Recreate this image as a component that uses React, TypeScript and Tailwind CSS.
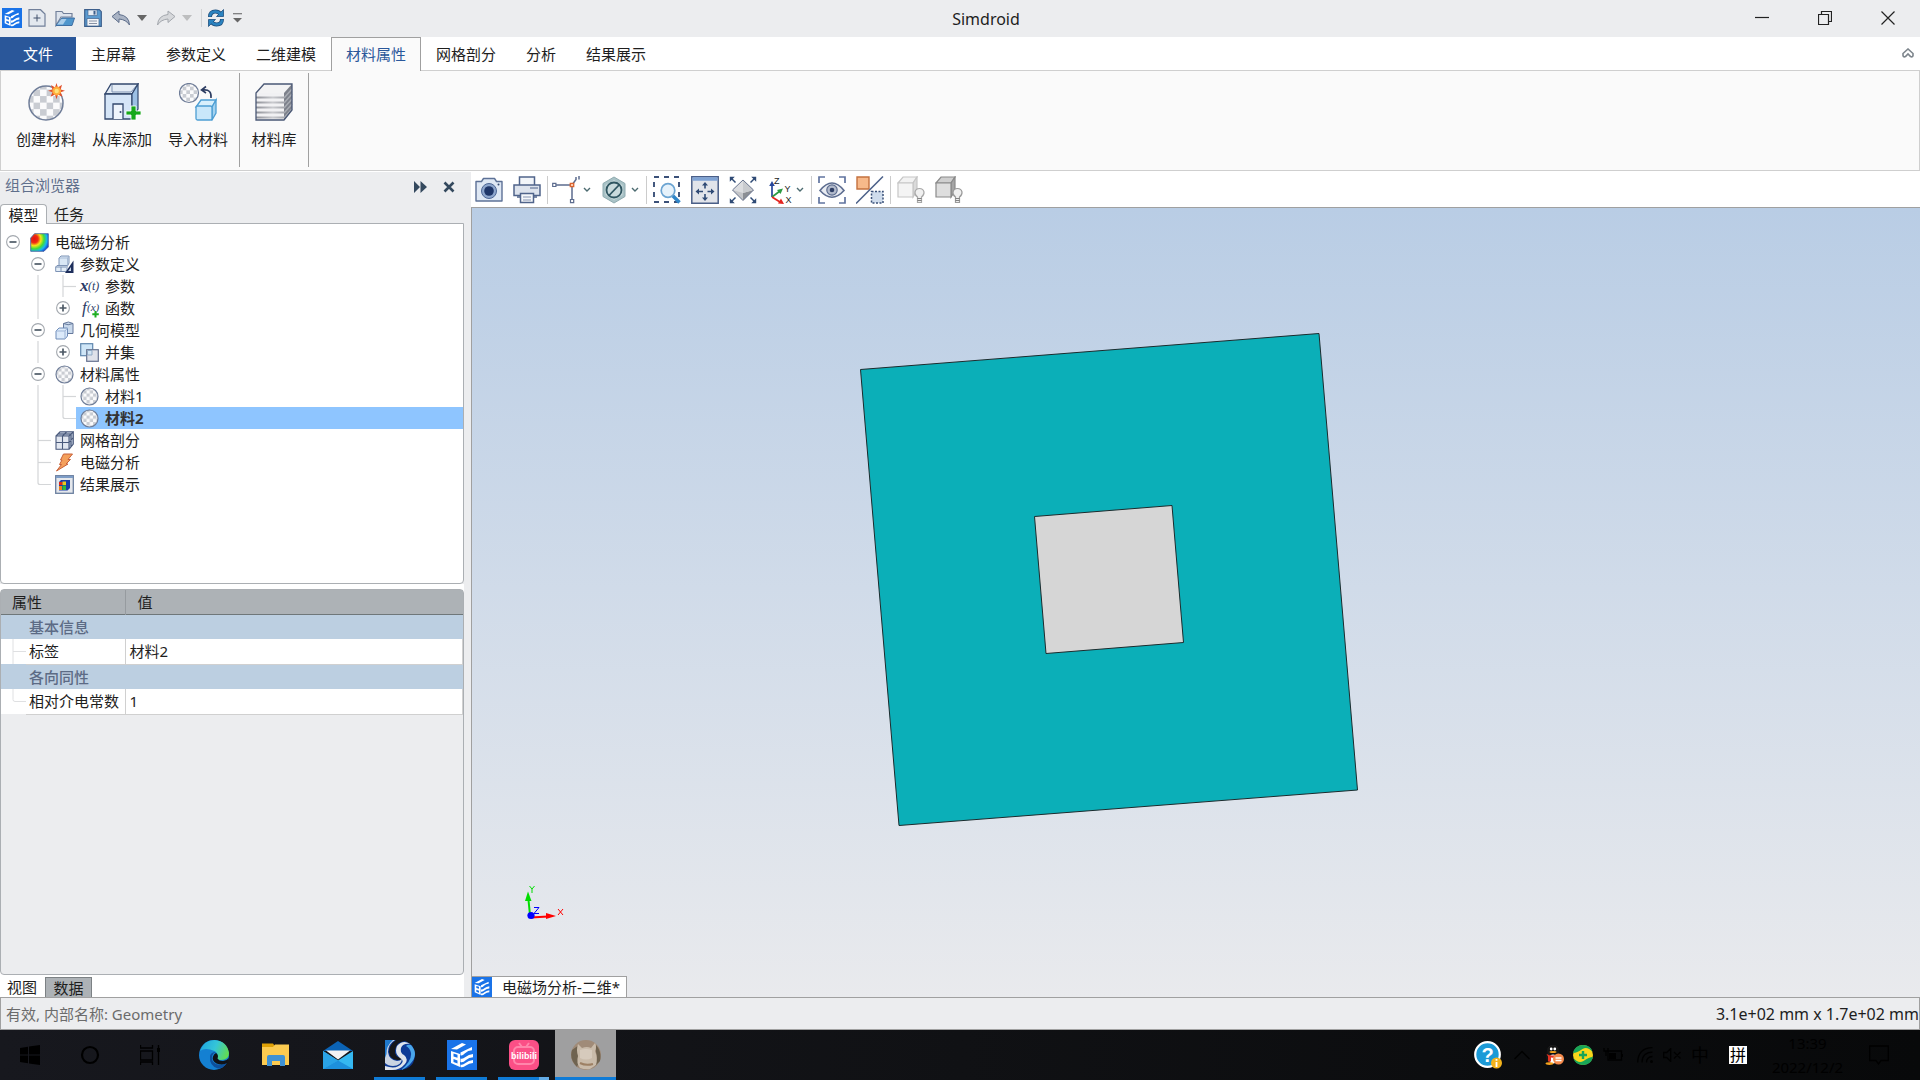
import { useState } from "react";
import type { ReactNode } from "react";

type Guide = "none" | "line" | "tee" | "elbow" | "plus" | "minus";

interface TreeNode {
  label: string;
  guides: Guide[];
  icon: ReactNode;
}

const NAVY = "#2f4a75";

/* ---------- shared drawings ---------- */

function AppLogo({ className }: { className: string }) {
  return (
    <svg viewBox="0 0 30 30" className={className}>
      <rect width="30" height="30" fill="#1a73e8" />
      <path d="M4 9 15 3l4 1.500-9 5z" fill="#fff" />
      <path d="M4 11l9 3v13l-9-4zM6.500 13.500v3l4 1.200v-3zM6.500 19v3l4 1.500v-3z" fill="#fff" fillRule="evenodd" />
      <path d="M13.500 12.500 25 7v3.200q-4 0-7 3t-4.500 2zM13.500 18.500q2 1 5-1.500t7.500-3v3.200q-4 0-7 2.800t-5.500 2zM13.500 24.500q2 1 5-1.500t7.500-3v3q-4 0-7 2.500t-5.500 1.500z" fill="#fff" />
    </svg>
  );
}

function Checker({ cx, cy, r, id }: { cx: number; cy: number; r: number; id: string }) {
  const s = r / 2.6;
  return (
    <>
      <defs>
        <pattern id={id} width={s * 2} height={s * 2} patternUnits="userSpaceOnUse">
          <rect width={s * 2} height={s * 2} fill="#fbfbfc" />
          <rect width={s} height={s} fill="#c9ccd2" />
          <rect x={s} y={s} width={s} height={s} fill="#c9ccd2" />
        </pattern>
      </defs>
      <circle cx={cx} cy={cy} r={r} fill={`url(#${id})`} stroke="#6f7d98" strokeWidth={r > 12 ? 1.5 : 1.2} />
    </>
  );
}

function Chevron() {
  return (
    <svg viewBox="0 0 8 6" className="h-1.5 w-2">
      <path d="M1 1l3 3 3-3" fill="none" stroke="#4c6b70" strokeWidth="1.4" />
    </svg>
  );
}

/* ---------- title bar ---------- */

function DropArrow({ color }: { color: string }) {
  return (
    <svg viewBox="0 0 10 6" className="h-1.5 w-2.5">
      <path d="M0 0h10L5 6z" fill={color} />
    </svg>
  );
}

function QuickAccess() {
  return (
    <div className="flex items-center gap-1.5 pl-0.5">
      <AppLogo className="h-5 w-5" />
      <div className="flex items-center gap-[9px]">
        <button aria-label="新建">
          <svg viewBox="0 0 18 18" className="h-[18px] w-[18px]">
            <path d="M1 .7h11.500L17 5v12.200H1z" fill="#e3e8ef" stroke="#72809a" strokeWidth="1.200" />
            <path d="M5.500 9h7M9 5.500v7" stroke="#40506c" />
          </svg>
        </button>
        <button aria-label="打开">
          <svg viewBox="0 0 20 18" className="h-[18px] w-5">
            <path d="M1 16.500v-14h6l1.500 2H17V8H6z" fill="#dde3ec" stroke="#72809a" strokeWidth="1.200" />
            <path d="M1 16.500 7 9h12.500L17 16.500z" fill="#4f96cc" stroke="#3f6fa3" />
            <path d="M2 15.500 6.500 10h5L8 15.500z" fill="#a9cdea" />
          </svg>
        </button>
        <button aria-label="保存">
          <svg viewBox="0 0 18 18" className="h-[18px] w-[18px]">
            <path d="M.7.7h14.600l2 2v14.600H.7z" fill="#5b9bd0" stroke="#3d5f8b" strokeWidth="1.200" />
            <rect x="4" y="1" width="9" height="5.500" fill="#e7edf4" stroke="#3d5f8b" strokeWidth=".6" />
            <rect x="9.500" y="1.800" width="2" height="3.800" fill="#3d5f8b" />
            <path d="M3 9.500h12V17H3z" fill="#f2f4f7" stroke="#3d5f8b" strokeWidth=".7" />
            <path d="M5 12h8M5 14.500h8" stroke="#8792a6" />
          </svg>
        </button>
        <div className="flex items-center gap-1.5">
          <button aria-label="撤销">
            <svg viewBox="0 0 20 18" className="h-[18px] w-5">
              <path d="M1 7.500 8 2v3.500q10 1 10.500 10.500Q15 10.500 8 10v3.500z" fill="#a9b3c4" stroke="#5d6d8a" strokeLinejoin="round" />
            </svg>
          </button>
          <DropArrow color="#666" />
        </div>
        <div className="flex items-center gap-1.5">
          <button aria-label="重做">
            <svg viewBox="0 0 20 18" className="h-[18px] w-5">
              <path d="M19 7.500 12 2v3.500Q2 6.500 1.500 16 5 10.500 12 10v3.500z" fill="#d6d8db" stroke="#a3a7ad" strokeLinejoin="round" />
            </svg>
          </button>
          <DropArrow color="#bdbebf" />
        </div>
        <div className="flex items-center border-l border-[#cfd1d3] pl-1.5">
          <button aria-label="刷新">
            <svg viewBox="0 0 16 18" className="h-[18px] w-4">
              <path d="M2 8q0-5.500 5.500-5.500Q10.500 2.500 12.500 5" fill="none" stroke="#1f4f7d" strokeWidth="4" />
              <path d="M15.500.5v7h-7z" fill="#2b83c0" stroke="#1f4f7d" strokeWidth=".8" />
              <path d="M14 10q0 5.500-5.500 5.500Q5.500 15.500 3.500 13" fill="none" stroke="#1f4f7d" strokeWidth="4" />
              <path d="M.5 17.500v-7h7z" fill="#2b83c0" stroke="#1f4f7d" strokeWidth=".8" />
              <path d="M2 7.500q0-5 5.500-5Q10.500 2.500 12.500 5M14 10.500q0 5-5.500 5Q5.500 15.500 3.500 13" fill="none" stroke="#2b83c0" strokeWidth="2.400" />
            </svg>
          </button>
        </div>
        <button aria-label="自定义快速访问">
          <svg viewBox="0 0 9 10" className="h-2.5 w-[9px]">
            <path d="M0 .7h9" stroke="#777" strokeWidth="1.200" />
            <path d="M0 5h9L4.500 9.500z" fill="#666" />
          </svg>
        </button>
      </div>
    </div>
  );
}

function TitleBar() {
  return (
    <header className="flex h-[37px] shrink-0 items-center bg-[#ecedef] pr-px pb-px">
      <QuickAccess />
      <h1 className="flex-1 pt-0.5 text-center text-base leading-6">Simdroid</h1>
      <div className="flex self-stretch">
        <button aria-label="最小化" className="flex w-[63px] items-center justify-center">
          <svg viewBox="0 0 14 14" className="h-3.5 w-3.5">
            <path d="M0 6.500h14" stroke="#222" strokeWidth="1.200" />
          </svg>
        </button>
        <button aria-label="还原" className="flex w-[63px] items-center justify-center">
          <svg viewBox="0 0 14 14" className="h-3.5 w-3.5">
            <path d="M3.500 3V.5h10v10H11M.5 3.500h10v10H.5z" fill="none" stroke="#222" strokeWidth="1.200" />
          </svg>
        </button>
        <button aria-label="关闭" className="flex w-[63px] items-center justify-center">
          <svg viewBox="0 0 14 14" className="h-3.5 w-3.5">
            <path d="M.5.5l13 13M13.500.5l-13 13" stroke="#222" strokeWidth="1.200" />
          </svg>
        </button>
      </div>
    </header>
  );
}

/* ---------- ribbon ---------- */

const MENU = ["主屏幕", "参数定义", "二维建模", "材料属性", "网格剖分", "分析", "结果展示"];

function MenuTabs({ active, onSelect }: { active: string; onSelect: (name: string) => void }) {
  return (
    <nav className="flex h-[34px] shrink-0 border-b border-[#cfcfcf] bg-white text-[15px] leading-5">
      <button className="h-[33px] bg-[#2a579a] px-[23px] text-white">文件</button>
      {MENU.map((name) =>
        name === active ? (
          <button
            key={name}
            onClick={() => onSelect(name)}
            className="h-[34px] border border-b-0 border-[#a0a0a0] bg-[#fafafa] px-3.5 pb-0.5 text-[#2a579a]"
          >
            {name}
          </button>
        ) : (
          <button key={name} onClick={() => onSelect(name)} className="h-[33px] px-[15px]">
            {name}
          </button>
        )
      )}
      <button aria-label="折叠功能区" className="ml-auto pr-1.5 pb-0.5">
        <svg viewBox="0 0 12 10" className="h-2.5 w-3">
          <path d="M1 5.500 6 1l5 4.500v2q-.5 2-2.500 1L6 6 3.500 8.500q-2 1-2.500-1z" fill="none" stroke="#7d858c" strokeWidth="1.600" />
        </svg>
      </button>
    </nav>
  );
}

function CreateMaterialIcon() {
  return (
    <svg viewBox="0 0 38 38" className="h-[38px] w-[38px]">
      <Checker cx={19} cy={20} r={17} id="chk-create" />
      <path d="M29.500 0l1.400 4.500L35 1.800l-1.300 4.700 4.300 1.300-4.300 1.500 1.800 4.500-4.500-2.300-1.500 4.700-1.500-4.700-4.500 2.300 2-4.500L21 7.800l4.500-1.300L24 2l4 2.500z" fill="#e2502c" />
      <circle cx="29.700" cy="8" r="4.400" fill="#ffae3b" />
      <circle cx="29.700" cy="8" r="2.200" fill="#ffe27a" />
    </svg>
  );
}

function AddFromLibraryIcon() {
  return (
    <svg viewBox="0 0 38 38" className="h-[38px] w-[38px]">
      <path d="M2 11 8 1h27l-6 10z" fill="#e4ecf5" stroke="#33486e" strokeWidth="1.300" />
      <path d="M9 2v7h19l6-7" fill="none" stroke="#7e93b2" />
      <path d="M2 11h27v25H2z" fill="#d5e5f7" stroke="#33486e" strokeWidth="1.300" />
      <path d="M29 11l6-10v25l-6 9z" fill="#9cc0e4" stroke="#33486e" strokeWidth="1.200" />
      <path d="M10 36V21h10v15" fill="#eef4fb" stroke="#33486e" strokeWidth="1.300" />
      <circle cx="17.500" cy="29" r="1" fill="#33486e" />
      <path d="M28 23h5v5h5v4h-5v5h-5v-5h-5v-4h5z" fill="#17a81a" stroke="#fff" strokeWidth=".8" />
    </svg>
  );
}

function ImportMaterialIcon() {
  return (
    <svg viewBox="0 0 38 38" className="h-[38px] w-[38px]">
      <Checker cx={10} cy={10} r={9.500} id="chk-import" />
      <path d="M24 7q9-1 8 8M27 3.500 22.500 7l4.500 3" fill="none" stroke="#2d3d62" strokeWidth="1.600" />
      <path d="M17 24l5-7h15l-4 7z" fill="#d8effc" stroke="#4d9ed3" strokeWidth="1.300" />
      <path d="M33 24l4-7v13l-4 7z" fill="#a3d2f0" stroke="#4d9ed3" strokeWidth="1.300" />
      <rect x="17" y="23" width="16" height="14" rx="1.500" fill="#c9e7fa" stroke="#4d9ed3" strokeWidth="1.300" />
    </svg>
  );
}

function LibraryIcon() {
  return (
    <svg viewBox="0 0 38 38" className="h-[38px] w-[38px]">
      <defs>
        <linearGradient id="slab" x1="0" x2="1" y1="0" y2="0">
          <stop offset="0" stopColor="#8f9198" />
          <stop offset=".6" stopColor="#c9cace" />
          <stop offset="1" stopColor="#a6a8ae" />
        </linearGradient>
      </defs>
      <path d="M1 10 9 1h28l-8 9z" fill="#f3f3f4" />
      <path d="M1 10h28v27H1z" fill="#f1f1f3" />
      <path d="M29 10l8-9v26l-8 10z" fill="#7d818b" />
      <path d="M1 13.500h28v2H1zM1 18.500h28v2H1zM1 23.500h28v2H1zM1 28.500h28v2H1zM1 33.500h28v2H1z" fill="url(#slab)" />
      <path d="M29 15l8-9M29 20l8-9M29 25l8-9M29 30l8-9M29 35l8-9" stroke="#a9acb3" strokeWidth="1.500" />
      <path d="M1 10 9 1h28v26l-8 10H1z" fill="none" stroke="#4a5875" strokeWidth="1.300" />
    </svg>
  );
}

function RibbonButton({ label, icon, className }: { label: string; icon: ReactNode; className: string }) {
  return (
    <button className={`flex flex-col items-center gap-2 pt-2.5 ${className}`}>
      {icon}
      <span className="text-[15px] leading-5">{label}</span>
    </button>
  );
}

function Ribbon() {
  return (
    <div className="flex h-[100px] shrink-0 border-x border-b border-[#cfcfcf] bg-[#fafafa] pt-0.5 pb-[3px]">
      <div className="flex items-start border-r border-[#a0a0a0] pr-[3px] pl-[7px]">
        <RibbonButton label="创建材料" icon={<CreateMaterialIcon />} className="w-[76px]" />
        <RibbonButton label="从库添加" icon={<AddFromLibraryIcon />} className="w-[76px]" />
        <RibbonButton label="导入材料" icon={<ImportMaterialIcon />} className="w-[76px]" />
      </div>
      <div className="flex items-start border-r border-[#a0a0a0]">
        <RibbonButton label="材料库" icon={<LibraryIcon />} className="w-[68px]" />
      </div>
    </div>
  );
}

/* ---------- model tree ---------- */

function GuideCell({ kind }: { kind: Guide }) {
  if (kind === "plus" || kind === "minus") {
    return (
      <button aria-label={kind === "plus" ? "展开" : "折叠"} className="flex h-[22px] w-[25px] items-center pl-[5px]">
        <svg viewBox="0 0 14 14" className="h-3.5 w-3.5">
          <circle cx="7" cy="7" r="6.400" fill="#fff" stroke="#a3a8ae" strokeWidth="1.100" />
          <path d={kind === "plus" ? "M3.500 7h7M7 3.500v7" : "M3.500 7h7"} stroke="#4d5a66" strokeWidth="1.700" />
        </svg>
      </button>
    );
  }
  return (
    <svg viewBox="0 0 25 22" className="h-[22px] w-[25px]">
      {kind !== "none" && (
        <g fill="none" stroke="#d4d6d8" strokeWidth="1.200">
          {(kind === "line" || kind === "tee") && <path d="M12 0v22" />}
          {kind === "tee" && <path d="M12 11.500H25" />}
          {kind === "elbow" && <path d="M12 0v9.500q0 2 2 2H25" />}
        </g>
      )}
    </svg>
  );
}

function RainbowIcon() {
  return (
    <svg viewBox="0 0 19 19" className="h-[19px] w-[19px]">
      <defs>
        <radialGradient id="rainbow" cx=".2" cy=".3" r="1">
          <stop offset="0" stopColor="#e01212" />
          <stop offset=".22" stopColor="#f02c12" />
          <stop offset=".38" stopColor="#f7e617" />
          <stop offset=".56" stopColor="#3fdc3c" />
          <stop offset=".72" stopColor="#17b6f0" />
          <stop offset=".9" stopColor="#1636d6" />
        </radialGradient>
      </defs>
      <path d="M.7 5 4.500.7h13.800V14L14 18.300H.7z" fill="url(#rainbow)" stroke="#3a5b96" strokeWidth=".8" />
    </svg>
  );
}

function ParamDefIcon() {
  return (
    <svg viewBox="0 0 19 19" className="h-[19px] w-[19px]">
      <path d="M4 3 6 1h8v7l-1.500 3H4z" fill="#d9e7f5" stroke="#7d93b5" />
      <path d="M4 3h8.500v8M12.500 3 14 1" fill="none" stroke="#9db1cd" strokeWidth=".8" />
      <path d="M.7 12l1.300-1.500h10v6H.7zM6 12v4.500M.7 12H11" fill="#e3edf7" stroke="#7d93b5" />
      <path d="M18.500 5.500V18H10z" fill="#1e2f5c" />
      <path d="M16 12v4h-2.800z" fill="#c9d6e8" />
    </svg>
  );
}

function ParamIcon() {
  return (
    <svg viewBox="0 0 19 19" className="h-[19px] w-[19px] overflow-visible">
      <text x="0" y="13.500" fontFamily="Liberation Serif, serif" fontStyle="italic" fontWeight="bold" fontSize="17" fill="#2b3b66">
        x
      </text>
      <text x="8" y="13" fontFamily="Liberation Serif, serif" fontStyle="italic" fontSize="12" fill="#2b3b66">
        (t)
      </text>
    </svg>
  );
}

function FunctionIcon() {
  return (
    <svg viewBox="0 0 19 19" className="h-[19px] w-[19px] overflow-visible">
      <text x="2" y="13.500" fontFamily="Liberation Serif, serif" fontStyle="italic" fontSize="17" fill="#2b3b66">
        f
      </text>
      <text x="7" y="12" fontFamily="Liberation Serif, serif" fontStyle="italic" fontSize="11" fill="#2b3b66">
        (x)
      </text>
      <path d="M15.500 12v6.500M12.300 15.200h6.500" stroke="#1fae22" strokeWidth="2" />
    </svg>
  );
}

function GeometryIcon() {
  return (
    <svg viewBox="0 0 19 19" className="h-[19px] w-[19px]">
      <path d="M8.500 2.500v10h9.500v-10q-4.500-3-9.500 0z" fill="#c9d9ec" stroke="#66799c" />
      <path d="M8.500 2.500q4.500 2.500 9.500 0" fill="none" stroke="#66799c" />
      <path d="M1 10l3-3h8.500v8l-2.500 3H1z" fill="#dceafa" stroke="#6f8cb8" />
      <path d="M1 10h9l2.500-3M10 10v8" fill="none" stroke="#9db4d6" />
    </svg>
  );
}

function UnionIcon() {
  return (
    <svg viewBox="0 0 19 19" className="h-[19px] w-[19px]">
      <rect x=".7" y=".7" width="12" height="12" fill="#cfe6f7" stroke="#5f86ad" strokeWidth="1.200" />
      <rect x="6.700" y="6.700" width="11.600" height="11.600" fill="#dfe2ea" stroke="#67738f" strokeWidth="1.200" />
      <path d="M7.500 7.500h4.500v4.500H7.500z" fill="#d3e5f4" stroke="#8fa9c4" />
    </svg>
  );
}

function MaterialIcon({ id }: { id: string }) {
  return (
    <svg viewBox="0 0 19 19" className="h-[19px] w-[19px]">
      <Checker cx={9.500} cy={9.500} r={8.500} id={id} />
    </svg>
  );
}

function MeshIcon() {
  return (
    <svg viewBox="0 0 19 19" className="h-[19px] w-[19px]">
      <path d="M1 5l4-4.200h13.300V13L14 18.300H1z" fill="#b4bfd2" />
      <path d="M1 5h13v13H1z" fill="#e2e7f0" />
      <path d="M1 5h13v13.300H1zM1 5 5 .8h13.300L14 5M18.300.8V13L14 18.300M7.500 18V5l4-4M1 11.500h13l4.300-5M3 3h13v13" fill="none" stroke="#4a5a7c" strokeWidth="1.100" />
    </svg>
  );
}

function BoltIcon() {
  return (
    <svg viewBox="0 0 19 19" className="h-[19px] w-[19px]">
      <path d="M8.500 1h9l-4.500 5.500h2.500L11 11h2L1.500 18l5-6.500H4.500L7 7H5.500z" fill="#f4a05c" stroke="#c7613a" strokeLinejoin="round" />
    </svg>
  );
}

function ResultIcon() {
  return (
    <svg viewBox="0 0 19 19" className="h-[19px] w-[19px]">
      <rect x=".7" y=".7" width="17.600" height="17.600" fill="#e4e7ec" stroke="#6b7f9f" strokeWidth="1.300" />
      <path d="M1 2h17" stroke="#7d9cc6" strokeWidth="2" />
      <path d="M4 7l2-2h9v8l-2.500 2.500H4z" fill="#1d3fa8" />
      <path d="M4 7h3.500v3H4z" fill="#e32619" />
      <path d="M7.500 6.500H11V10H7.500z" fill="#f0c91c" />
      <path d="M4 11h3v4H4z" fill="#f0831c" />
      <path d="M7.500 10.500H11V15H7.500z" fill="#2ebc3c" />
    </svg>
  );
}

const TREE: TreeNode[] = [
  { label: "电磁场分析", guides: ["minus"], icon: <RainbowIcon /> },
  { label: "参数定义", guides: ["none", "minus"], icon: <ParamDefIcon /> },
  { label: "参数", guides: ["none", "line", "tee"], icon: <ParamIcon /> },
  { label: "函数", guides: ["none", "line", "plus"], icon: <FunctionIcon /> },
  { label: "几何模型", guides: ["none", "minus"], icon: <GeometryIcon /> },
  { label: "并集", guides: ["none", "line", "plus"], icon: <UnionIcon /> },
  { label: "材料属性", guides: ["none", "minus"], icon: <MaterialIcon id="chk-mat" /> },
  { label: "材料1", guides: ["none", "line", "tee"], icon: <MaterialIcon id="chk-mat1" /> },
  { label: "材料2", guides: ["none", "line", "elbow"], icon: <MaterialIcon id="chk-mat2" /> },
  { label: "网格剖分", guides: ["none", "tee"], icon: <MeshIcon /> },
  { label: "电磁分析", guides: ["none", "tee"], icon: <BoltIcon /> },
  { label: "结果展示", guides: ["none", "elbow"], icon: <ResultIcon /> },
];

function ModelTree() {
  const [selected, setSelected] = useState("材料2");
  return (
    <ul className="h-[361px] shrink-0 rounded-b border border-[#abafb3] bg-white pt-[7px]">
      {TREE.map((node) => (
        <li key={node.label} className="flex h-[22px]">
          {node.guides.map((kind, i) => (
            <GuideCell key={i} kind={kind} />
          ))}
          <button
            onClick={() => setSelected(node.label)}
            className={`flex flex-1 items-center gap-1.5 pl-1 text-left ${
              selected === node.label ? "bg-[#8ec5ff] font-bold text-[#333]" : ""
            }`}
          >
            {node.icon}
            <span>{node.label}</span>
          </button>
        </li>
      ))}
    </ul>
  );
}

/* ---------- property table ---------- */

function PropertyTable() {
  return (
    <div className="mt-[5px] flex-1 rounded border border-[#abafb3] bg-[#ecedef]">
      <table className="w-full table-fixed border-collapse text-left">
        <colgroup>
          <col className="w-[25px]" />
          <col className="w-[99px]" />
          <col />
        </colgroup>
        <thead>
          <tr className="h-6 border-b border-[#6f7779] bg-[#adb2b6]">
            <th colSpan={2} className="border-r border-[#969b9f] pl-[11px] font-normal">属性</th>
            <th className="pl-3 font-normal">值</th>
          </tr>
        </thead>
        <tbody>
          <tr className="h-[25px] bg-[#bccfe1] text-[#5c6b85]">
            <td />
            <th colSpan={2} className="pl-[3px] font-medium">基本信息</th>
          </tr>
          <tr className="h-[25px] bg-white">
            <td className="p-0">
              <svg viewBox="0 0 25 25" className="block h-[25px] w-[25px]">
                <path d="M12 0v25M12 12.500h13" stroke="#dfe0e2" />
              </svg>
            </td>
            <td className="border-r border-b border-[#d0d0d0] pl-[3px]">标签</td>
            <td className="border-r border-b border-[#d0d0d0] pl-1">材料2</td>
          </tr>
          <tr className="h-[25px] bg-[#bccfe1] text-[#5c6b85]">
            <td />
            <th colSpan={2} className="pl-[3px] font-medium">各向同性</th>
          </tr>
          <tr className="h-[25px] bg-white">
            <td className="p-0">
              <svg viewBox="0 0 25 25" className="block h-[25px] w-[25px]">
                <path d="M12 0v10.500q0 2 2 2h11" fill="none" stroke="#dfe0e2" />
              </svg>
            </td>
            <td className="border-r border-b border-[#d0d0d0] pl-[3px] whitespace-nowrap">相对介电常数</td>
            <td className="border-r border-b border-[#d0d0d0] pl-1">1</td>
          </tr>
        </tbody>
      </table>
    </div>
  );
}

function Browser() {
  return (
    <aside className="flex w-[471px] shrink-0 flex-col bg-[#ecedef] pr-[7px] text-[15px] leading-5">
      <div className="flex h-8 items-center pr-[2px] pl-[5px] text-[#5f6f8c]">
        <h2 className="flex-1 pb-1.5">组合浏览器</h2>
        <div className="flex items-center gap-4 pr-[7px] pb-0.5">
          <button aria-label="移动面板">
            <svg viewBox="0 0 13 12" className="h-3 w-[13px]">
              <path d="M0 0l6 6-6 6zM6.500 0l6.500 6-6.500 6z" fill="#34495e" />
            </svg>
          </button>
          <button aria-label="关闭面板">
            <svg viewBox="0 0 12 12" className="h-3 w-3">
              <path d="M1.500 1.500l9 9M10.500 1.500l-9 9" stroke="#34495e" strokeWidth="2.600" />
            </svg>
          </button>
        </div>
      </div>
      <div className="flex h-[19px] shrink-0">
        <button className="z-10 -mb-px w-[47px] rounded-t border border-b-0 border-[#abafb3] bg-white">模型</button>
        <button className="pl-[7px]">任务</button>
      </div>
      <ModelTree />
      <div className="flex flex-1 flex-col bg-white">
        <PropertyTable />
        <div className="flex h-[22px] items-end">
          <button className="w-[45px] pl-[7px] text-left">视图</button>
          <button className="h-5 w-[47px] border border-b-0 border-[#7c8184] bg-[#adb2b6]">数据</button>
        </div>
      </div>
    </aside>
  );
}

/* ---------- viewport toolbar ---------- */

function ToolSvg({ label, children }: { label: string; children: ReactNode }) {
  return (
    <button aria-label={label}>
      <svg viewBox="0 0 28 28" className="h-7 w-7">
        {children}
      </svg>
    </button>
  );
}

function DimCube({ dark }: { dark: boolean }) {
  const line = dark ? "#8a8a8a" : "#c6c6c6";
  return (
    <>
      <path d="M1 7 6 1h14l-4 6z" fill={dark ? "#cfcfcf" : "#f2f2f2"} stroke={line} strokeWidth="1.200" />
      <path d="M16 7l4-6v14l-4 6z" fill={dark ? "#a5a5a5" : "#dadada"} stroke={line} strokeWidth="1.200" />
      <path d="M1 7h15v14H1z" fill={dark ? "#dedede" : "#f4f4f4"} stroke={line} strokeWidth="1.200" />
      <path d="M20.500 21q-3-2-2.500-5 .8-3.500 4.500-3.500t4.500 3.500q.3 3-2.500 5v5.500h-4z" fill="#f0f0f0" stroke={dark ? "#9a9a9a" : "#a8a8a8"} strokeWidth="1.200" />
      <path d="M20.500 22.500h4M20.500 24.500h4" stroke="#777" strokeWidth=".9" />
    </>
  );
}

function ViewToolbar() {
  return (
    <div className="flex h-9 shrink-0 items-center border-b border-[#a0a0a0] bg-white">
      <div className="flex items-center gap-2.5 border-r border-[#cccccc] pr-1.5 pl-1">
        <ToolSvg label="截图">
          <path d="M1 5.500h5.500l2-3h11l2 3H27V25H1z" fill="#dfe8f4" stroke="#5d7196" strokeWidth="1.400" strokeLinejoin="round" />
          <circle cx="14" cy="15" r="7.500" fill="#8ea6cc" stroke="#4d6694" />
          <circle cx="14" cy="15" r="4.800" fill="#1f3668" />
          <circle cx="23.500" cy="8.500" r="1" fill="#33486e" />
        </ToolSvg>
        <ToolSvg label="打印">
          <path d="M6.500 9V1h15v8" fill="#f2f5f9" stroke="#50648b" strokeWidth="1.500" />
          <path d="M1 9h26v10.500H1z" fill="#dde3ed" stroke="#50648b" strokeWidth="1.500" />
          <path d="M17 12h8" stroke="#50648b" />
          <path d="M4 21h20" stroke="#50648b" strokeWidth="1.500" />
          <path d="M7.500 17.500h13v9h-13z" fill="#f5f7fa" stroke="#50648b" strokeWidth="1.500" />
          <path d="M10 21h8M10 24h8" stroke="#8392b0" />
        </ToolSvg>
      </div>
      <div className="flex items-center border-r border-[#cccccc] pr-[7px] pl-1">
        <div className="flex items-center gap-[3px]">
          <ToolSvg label="捕捉">
            <path d="M3 9h17v16M20 9l4-5.500L24 1M27 0v3.500" fill="none" stroke="#5c6c8e" strokeWidth="1.500" />
            <path d="M.7 7.300h3.200v3.200H.7zM18.500 23.500h3.200v3.200h-3.200z" fill="#fff" stroke="#5c6c8e" strokeWidth="1.200" />
            <path d="M18.300 7.300h3.400v3.400h-3.400z" fill="#fcc9ae" stroke="#d9632f" strokeWidth="1.300" />
          </ToolSvg>
          <Chevron />
        </div>
        <div className="ml-2.5 flex items-center gap-1">
          <button aria-label="显示样式">
            <svg viewBox="0 0 26 28" className="h-7 w-[26px]">
              <path d="M13 1l11 6.500v13L13 27 2 20.500v-13z" fill="#a9c2c6" stroke="#8fabb0" />
              <path d="M13 4l8.500 5v10L13 24l-8.500-5V9z" fill="#c9dadc" />
              <circle cx="13" cy="14" r="7.500" fill="none" stroke="#2f5560" strokeWidth="1.800" />
              <path d="M8 19.500 18.500 8.500" stroke="#2f5560" strokeWidth="1.800" />
            </svg>
          </button>
          <Chevron />
        </div>
      </div>
      <div className="flex items-center border-r border-[#cccccc] pr-[7px] pl-1.5">
        <div className="flex items-center gap-2.5">
          <ToolSvg label="框选缩放">
            <path d="M1 1h25v25H1z" fill="none" stroke="#3b5179" strokeWidth="1.900" strokeDasharray="5 5" />
            <path d="M6 6h14v14H6z" fill="#fff" />
            <path d="M19 19l7.500 7.500" stroke="#2f86c9" strokeWidth="3.600" />
            <circle cx="15" cy="14.500" r="6.800" fill="#e6f2fb" stroke="#6ba4d2" strokeWidth="1.700" />
          </ToolSvg>
          <ToolSvg label="平移">
            <path d="M.8.8h26.400v26.400H.8z" fill="#e1e4ea" stroke="#4a5f88" strokeWidth="1.500" />
            <path d="M1.500 3h25" stroke="#7fa3d4" strokeWidth="3.500" />
            <path d="M14 8v4.500M14 18v4.500M6.500 15.500H12M16.500 15.500H22" stroke={NAVY} strokeWidth="1.600" />
            <path d="M14 6l3 3.500h-6zM14 25l3-3.500h-6zM4.500 15.500 8 12.500v6zM23.500 15.500l-3.500-3v6z" fill={NAVY} />
          </ToolSvg>
          <ToolSvg label="适应窗口">
            <path d="M14 4l10.500 10L14 24.500 3.500 14z" fill="#dcdde0" />
            <path d="M3.500 14 14 17v7.500z" fill="#c3c5c9" />
            <path d="M24.500 14 14 17v7.500z" fill="#8c8f95" />
            <path d="M14 4l10.500 10L14 17z" fill="#c9cbcf" />
            <path d="M14 4l10.500 10L14 24.500 3.500 14z" fill="none" stroke="#6b7690" />
            <path d="M6.500 6.500 2.500 2.500M21.500 6.500l4-4M6.500 21.500l-4 4M21.500 21.500l4 4" stroke={NAVY} strokeWidth="1.500" />
            <path d="M.8.8h5L.8 5.800zM27.200.8h-5l5 5zM.8 27.200h5l-5-5zM27.200 27.200h-5l5-5z" fill={NAVY} />
          </ToolSvg>
        </div>
        <div className="ml-2.5 flex items-center gap-px">
          <ToolSvg label="视角">
            <path d="M5 21V8" stroke="#27469b" strokeWidth="1.700" />
            <path d="M5 5l2.800 5H2.200z" fill="#27469b" />
            <path d="M5 21l8-6" stroke="#2c9b43" strokeWidth="1.700" />
            <path d="M16 12.500l-2.500 5.500-3.500-4z" fill="#2c9b43" />
            <path d="M5 21l8 5" stroke="#e3241f" strokeWidth="1.700" />
            <path d="M17 28l-6-.5 3-5z" fill="#e3241f" />
            <text x="7" y="7.500" fontSize="9" fontFamily="Liberation Sans, sans-serif" fill="#222">Z</text>
            <text x="17.500" y="15.500" fontSize="9" fontFamily="Liberation Sans, sans-serif" fill="#222">Y</text>
            <text x="18.500" y="27" fontSize="9" fontFamily="Liberation Sans, sans-serif" fill="#222">X</text>
          </ToolSvg>
          <Chevron />
        </div>
      </div>
      <div className="flex items-center gap-2.5 border-r border-[#cccccc] px-1.5">
        <ToolSvg label="显示全部">
          <path d="M1 7V1h6M21 1h6v6M27 21v6h-6M7 27H1v-6" fill="none" stroke="#6074a0" strokeWidth="1.700" />
          <path d="M2 14.500q12-15 24 0-12 13.500-24 0z" fill="#e9ecf2" stroke="#5d6d90" strokeWidth="1.600" />
          <circle cx="14" cy="14" r="5.200" fill="#b2bacb" stroke="#5d6d90" strokeWidth="1.200" />
          <circle cx="14" cy="14" r="2.300" fill="#2f3f66" />
        </ToolSvg>
        <ToolSvg label="反选显示">
          <path d="M1 1h12v12H1z" fill="#f7b98a" stroke="#c4713f" strokeWidth="1.400" />
          <path d="M0 27.500 27 .5" stroke="#4a5f88" strokeWidth="1.500" />
          <path d="M15.500 15.500h11.500v11.500H15.500z" fill="#cfdcec" stroke="#3b5179" strokeWidth="1.500" strokeDasharray="2 1.500" />
        </ToolSvg>
      </div>
      <div className="flex items-center gap-2.5 pl-1.5">
        <ToolSvg label="显示对象">
          <DimCube dark={false} />
        </ToolSvg>
        <ToolSvg label="隐藏对象">
          <DimCube dark />
        </ToolSvg>
      </div>
    </div>
  );
}

/* ---------- viewport ---------- */

function AxisTriad() {
  return (
    <svg viewBox="0 0 40 40" className="mb-[50px] ml-[52px] h-10 w-10">
      <path d="M6 29 4.500 14" stroke="#0d0" strokeWidth="2" />
      <path d="M4 5.500l3.500 9.500H1z" fill="#0d0" />
      <path d="M7 31.500l17-1" stroke="#f00" strokeWidth="2" />
      <path d="M32 30l-10-3v6z" fill="#f00" />
      <circle cx="7" cy="29.500" r="3.600" fill="#00f" />
      <path d="M5.500 0l2.500 3 2.500-3M8 3v4" fill="none" stroke="#0d0" />
      <path d="M10 21.500h5l-5 6h5" fill="none" stroke="#00f" />
      <path d="M34 23l5 6M39 23l-5 6" stroke="#f00" />
    </svg>
  );
}

function Viewport() {
  return (
    <section className="flex min-w-0 flex-1 flex-col">
      <ViewToolbar />
      <div className="flex min-h-0 flex-1 flex-col border-l border-[#a0a0a0] bg-linear-to-b from-[#b9cde5] to-[#e9eaed]">
        <div className="grid min-h-0 flex-1 items-end">
          <svg viewBox="0 0 1448 768" className="col-start-1 row-start-1 h-full w-full">
            <path d="M388.500 161.500 847 125.500 885.500 582 427 617.500z" fill="#0bafb8" stroke="#1b2b2d" />
            <path d="M562.500 308.500 700 297.500 711.500 434.500 574 445.500z" fill="#d6d6d6" stroke="#1b2b2d" />
          </svg>
          <div className="col-start-1 row-start-1 flex">
            <AxisTriad />
          </div>
        </div>
        <div className="flex h-[21px] shrink-0">
          <button className="flex items-center gap-2.5 border-t border-r border-[#a0a0a0] bg-white pr-1.5 text-[15px] leading-5">
            <AppLogo className="h-5 w-5" />
            <span>电磁场分析-二维*</span>
          </button>
        </div>
      </div>
    </section>
  );
}

/* ---------- taskbar ---------- */

type TaskState = "idle" | "running" | "grouped" | "active";

function TaskCell({ label, state = "idle", children }: { label: string; state?: TaskState; children: ReactNode }) {
  return (
    <button
      aria-label={label}
      className={`flex h-full w-[61px] flex-col items-center ${state === "active" ? "bg-[#9f9fa0]" : ""}`}
    >
      <span className="flex flex-1 items-center pt-[3px]">{children}</span>
      {state === "idle" && <span className="h-[3px]" />}
      {state === "running" && <span className="h-[3px] w-[51px] bg-[#0f7bd6]" />}
      {state === "grouped" && (
        <span className="flex h-[3px] w-[51px] justify-end bg-[#0f7bd6]">
          <span className="w-2.5 bg-[#63abe6]" />
        </span>
      )}
      {state === "active" && <span className="h-[3px] w-full bg-[#0f7bd6]" />}
    </button>
  );
}

function Taskbar() {
  return (
    <footer className="flex h-[50px] shrink-0 items-center bg-linear-to-r from-[#17181e] via-[#101114] to-[#08090a] text-[15px] text-black">
      <button aria-label="开始" className="flex w-[60px] justify-center">
        <svg viewBox="0 0 20 20" className="h-5 w-5">
          <path d="M0 3l8-1.200v7.700H0zM9 1.600 20 0v9.500H9zM0 10.500h8v7.700L0 17zM9 10.500h11V20L9 18.400z" fill="#000" />
        </svg>
      </button>
      <button aria-label="搜索" className="flex w-[60px] justify-center">
        <svg viewBox="0 0 20 20" className="h-5 w-5">
          <circle cx="10" cy="10" r="8" fill="none" stroke="#000" strokeWidth="2.200" />
        </svg>
      </button>
      <button aria-label="任务视图" className="flex w-[60px] justify-center">
        <svg viewBox="0 0 20 20" className="h-5 w-5">
          <path d="M.5 0v3h12V0M.5 6h12v9H.5zM.5 20v-3h12v3M18.500 0v20" fill="none" stroke="#000" strokeWidth="1.300" />
          <path d="M17 3h3v4h-3z" fill="#000" />
        </svg>
      </button>
      <div className="flex gap-px self-stretch pl-[3px]">
        <TaskCell label="Edge">
          <svg viewBox="0 0 30 30" className="h-[30px] w-[30px]">
            <defs>
              <linearGradient id="edge-top" x1="0" x2="1" y1=".3" y2=".6">
                <stop offset="0" stopColor="#1fa8e0" />
                <stop offset=".5" stopColor="#35c5d8" />
                <stop offset="1" stopColor="#63dd4e" />
              </linearGradient>
            </defs>
            <circle cx="15" cy="15" r="15" fill="#1480d2" />
            <path d="M1 11Q5 0 15.500 0 28 1 30 13q0 7-8 7-5 0-4-3.500 1-4-2.500-5.500Q6 7 1 11z" fill="url(#edge-top)" />
            <path d="M11 16q-1 10 8 12.500 5 0 9-5.500-6 3-11 1-5-2.500-4-8 1-3 4-4-5 0-6 4z" fill="#0d4f9c" />
            <path d="M17 13q3 2 1.500 5.500Q20 21 24 21q4-.5 6-3l-1.500 5q-5 2.500-11 .5-5-3-3.500-7 1-3 3-3.500z" fill="#101218" />
          </svg>
        </TaskCell>
        <TaskCell label="文件资源管理器">
          <svg viewBox="0 0 30 30" className="h-[30px] w-[30px]">
            <path d="M1 3.500h11l2.500 3.500H1z" fill="#e0a106" />
            <path d="M1 7h11l2-2.500h14V25H1z" fill="#fccb50" />
            <path d="M6 26V17q0-2 2-2h14q2 0 2 2v9h-5v-5h-8v5z" fill="#3f92d4" />
          </svg>
        </TaskCell>
        <TaskCell label="邮件">
          <svg viewBox="0 0 30 30" className="h-[30px] w-[30px]">
            <path d="M0 11 15 1l15 10z" fill="#0b63b5" />
            <path d="M0 11l15 9.500L30 11v18H0z" fill="#35b8f1" />
            <path d="M0 11l15 9.500L0 29z" fill="#2aa3e6" />
            <path d="M15 20.500 30 29H0z" fill="#1d90dc" />
            <path d="M3 10.500h24L15 19.500z" fill="#f2f2f4" />
          </svg>
        </TaskCell>
        <TaskCell label="Simdroid 启动器" state="running">
          <svg viewBox="0 0 30 30" className="h-[30px] w-[30px]">
            <path d="M0 0h11Q4 5 4 12q1 8 9 8 4 0 4-2-8-1-7-8Q11 2 20 1q9 3 10 13 0 14-14 16H0z" fill="#0e3a96" />
            <path d="M0 0h10Q3 4 3 12q1 8 9 9 3 0 5-2-1 7-9 7-5 0-8-3z" fill="#c9d3e2" />
            <path d="M0 0h8Q1 6 1.500 14L0 18z" fill="#1f78cc" />
            <path d="M12 6q6-7 13-2-7-1-9 4-1 5 3 7 5 4 1 9-5 6-13 6H0v-4q12 4 17-3 2-3-2-5-6-5-3-12z" fill="#dfe4ec" />
            <path d="M26 5q8 9 0 18-4 5-10 7 11-9 10-17-1-5-5-7 2-2 5-1z" fill="#4aa6ea" />
          </svg>
        </TaskCell>
        <TaskCell label="Simdroid" state="running">
          <AppLogo className="h-[30px] w-[30px]" />
        </TaskCell>
        <TaskCell label="哔哩哔哩" state="grouped">
          <svg viewBox="0 0 30 30" className="h-[30px] w-[30px]">
            <rect width="30" height="30" rx="6" fill="#fb4f86" />
            <rect x="5" y="7" width="20" height="17" rx="4" fill="none" stroke="#ff86ab" strokeWidth="2" />
            <path d="M10 3l3 4M20 3l-3 4" stroke="#ff86ab" strokeWidth="2" />
            <text x="15" y="19" textAnchor="middle" fontSize="9" fontWeight="bold" fontFamily="Liberation Sans, sans-serif" fill="#fff">
              bilibili
            </text>
          </svg>
        </TaskCell>
        <TaskCell label="宠物" state="active">
          <svg viewBox="0 0 30 30" className="h-[30px] w-[30px]">
            <circle cx="15" cy="15" r="15" fill="#a08b78" />
            <path d="M1 10q-3 9 5 17l3-8q-3-8-1-14zM25 5q6 7 4 16l-5 5q3-8 1-14z" fill="#6f6350" />
            <path d="M7 4l4 4q5-2 9 0l4-5q2 4 0 8 3 7 1 14l-6 4q-5 1-10-1-4-5-2-12-2-6 0-12z" fill="#c9bbaa" />
            <path d="M9 10q6-2 12 0v8q-6 3-12 0z" fill="#d6cabc" />
            <path d="M9 23q6 3 13 1" stroke="#9d8064" strokeWidth="2" fill="none" />
          </svg>
        </TaskCell>
      </div>
      <div className="ml-auto flex items-center pr-[31px]">
        <svg viewBox="0 0 28 28" className="h-7 w-7">
          <circle cx="13.500" cy="13.500" r="12.300" fill="#1b9ad7" stroke="#fff" strokeWidth="2.200" />
          <text x="13.500" y="20.500" textAnchor="middle" fontSize="20" fontWeight="bold" fontFamily="Liberation Sans, sans-serif" fill="#fff">?</text>
          <circle cx="22.500" cy="22" r="5.500" fill="#f3b21b" />
          <path d="M22.500 21v5M22.500 18v1.800" stroke="#fff" strokeWidth="1.800" />
        </svg>
        <svg viewBox="0 0 16 10" className="ml-3 h-2.5 w-4">
          <path d="M.5 9 8 1.500 15.500 9" fill="none" stroke="#000" strokeWidth="1.400" />
        </svg>
        <svg viewBox="0 0 20 20" className="ml-3.5 h-5 w-5">
          <ellipse cx="9" cy="12" rx="7" ry="7" fill="#151515" />
          <ellipse cx="9" cy="5.500" rx="5.200" ry="5.500" fill="#111" stroke="#333" strokeWidth=".4" />
          <ellipse cx="9" cy="14" rx="4" ry="4.500" fill="#fff" />
          <circle cx="7.200" cy="4" r="1.400" fill="#fff" />
          <circle cx="10.800" cy="4" r="1.400" fill="#fff" />
          <ellipse cx="9" cy="7" rx="3.500" ry="1.100" fill="#f5a21c" />
          <path d="M2.500 9q6 3 12.500 0v2.500q-4 1.500-8 1v4H4v-5z" fill="#e23324" />
          <ellipse cx="5.500" cy="18.600" rx="4" ry="1.400" fill="#f5a21c" />
          <circle cx="14.500" cy="14" r="5.500" fill="#f58a4b" />
          <path d="M11.500 13h6M11.500 15.500h6" stroke="#fff" strokeWidth="1.300" />
        </svg>
        <svg viewBox="0 0 20 20" className="ml-[9px] h-5 w-5">
          <circle cx="10" cy="10" r="10" fill="#f8d71c" />
          <path d="M0 8Q2 0 10 0t9.500 7q-5-6-10-3Q4 8 0 8zM20 12q-2 8-10 8T.5 13q5 6 10 3 5.500-4 9.500-4z" fill="#18a558" />
          <path d="M10 6v8M6 10h8" stroke="#18a558" strokeWidth="2.400" />
        </svg>
        <svg viewBox="0 0 20 14" className="ml-2.5 h-3.5 w-5">
          <path d="M5 3h13.500v9H5zM19.500 6v3" fill="none" stroke="#000" strokeWidth="1.300" />
          <path d="M6 5h7v6H6z" fill="#000" />
          <path d="M1 0v3h4V0M3 3v5" fill="none" stroke="#000" strokeWidth="1.300" />
        </svg>
        <svg viewBox="0 0 16 16" className="ml-3.5 h-4 w-4">
          <path d="M.7 15.500Q1 1 15.500.7M5 15.500Q5 5.500 15.500 5.200M9.500 15.500q0-5.500 6-6" fill="none" stroke="#000" strokeWidth="1.300" />
          <circle cx="14.500" cy="14.500" r="1.500" fill="#000" />
        </svg>
        <svg viewBox="0 0 18 14" className="ml-2.5 h-3.5 w-[18px]">
          <path d="M.7 4.500h3l4-4v13l-4-4h-3zM11 4l6.500 6.500M17.500 4 11 10.500" fill="none" stroke="#000" strokeWidth="1.300" />
        </svg>
        <span className="ml-2.5 text-[18px] leading-6">中</span>
        <span className="ml-5 flex h-[18px] w-[18px] items-center justify-center bg-white text-base leading-[18px]">拼</span>
        <div className="ml-6 flex w-[73px] flex-col items-center leading-6">
          <span>13:39</span>
          <span>2022/12/2</span>
        </div>
        <svg viewBox="0 0 20 20" className="ml-[25px] h-5 w-5">
          <path d="M.7 1h18.600v14.500H12L9.500 19 7 15.500H.7z" fill="none" stroke="#000" strokeWidth="1.300" />
        </svg>
      </div>
    </footer>
  );
}

export default function App() {
  const [menu, setMenu] = useState("材料属性");

  return (
    <div className="flex h-screen flex-col overflow-hidden bg-white font-['Noto_Sans','Noto_Sans_CJK_SC',sans-serif] text-[#1e1e1e]">
      <TitleBar />
      <MenuTabs active={menu} onSelect={setMenu} />
      <Ribbon />
      <main className="flex min-h-0 flex-1 pt-px">
        <Browser />
        <Viewport />
      </main>
      <div className="flex h-[33px] shrink-0 items-center justify-between border border-[#a0a0a0] bg-[#ecedef] pl-[5px] text-[15px] leading-5">
        <span className="text-[#6b6b6b]">有效, 内部名称: Geometry</span>
        <span className="text-base leading-5">3.1e+02 mm x 1.7e+02 mm</span>
      </div>
      <Taskbar />
    </div>
  );
}
